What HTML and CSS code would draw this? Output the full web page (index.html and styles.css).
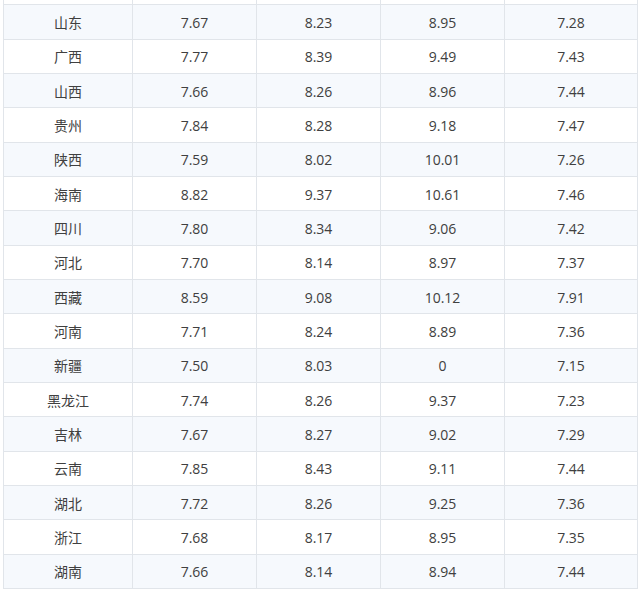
FILE: index.html
```html
<!DOCTYPE html>
<html lang="zh-CN">
<head>
<meta charset="utf-8">
<title>油价表</title>
<link rel="stylesheet" href="styles.css">
</head>
<body>
<div class="wrap">
<table class="price-table">
<colgroup>
<col class="c1"><col class="c2"><col class="c3"><col class="c4"><col class="c5">
</colgroup>
<tbody>
<tr class="prev"><td></td><td></td><td></td><td></td><td></td></tr>
<tr><td>山东</td><td>7.67</td><td>8.23</td><td>8.95</td><td>7.28</td></tr>
<tr><td>广西</td><td>7.77</td><td>8.39</td><td>9.49</td><td>7.43</td></tr>
<tr><td>山西</td><td>7.66</td><td>8.26</td><td>8.96</td><td>7.44</td></tr>
<tr><td>贵州</td><td>7.84</td><td>8.28</td><td>9.18</td><td>7.47</td></tr>
<tr><td>陕西</td><td>7.59</td><td>8.02</td><td>10.01</td><td>7.26</td></tr>
<tr><td>海南</td><td>8.82</td><td>9.37</td><td>10.61</td><td>7.46</td></tr>
<tr><td>四川</td><td>7.80</td><td>8.34</td><td>9.06</td><td>7.42</td></tr>
<tr><td>河北</td><td>7.70</td><td>8.14</td><td>8.97</td><td>7.37</td></tr>
<tr><td>西藏</td><td>8.59</td><td>9.08</td><td>10.12</td><td>7.91</td></tr>
<tr><td>河南</td><td>7.71</td><td>8.24</td><td>8.89</td><td>7.36</td></tr>
<tr><td>新疆</td><td>7.50</td><td>8.03</td><td>0</td><td>7.15</td></tr>
<tr><td>黑龙江</td><td>7.74</td><td>8.26</td><td>9.37</td><td>7.23</td></tr>
<tr><td>吉林</td><td>7.67</td><td>8.27</td><td>9.02</td><td>7.29</td></tr>
<tr><td>云南</td><td>7.85</td><td>8.43</td><td>9.11</td><td>7.44</td></tr>
<tr><td>湖北</td><td>7.72</td><td>8.26</td><td>9.25</td><td>7.36</td></tr>
<tr><td>浙江</td><td>7.68</td><td>8.17</td><td>8.95</td><td>7.35</td></tr>
<tr><td>湖南</td><td>7.66</td><td>8.14</td><td>8.94</td><td>7.44</td></tr>
</tbody>
</table>
</div>
</body>
</html>
```
FILE: styles.css
```css
html, body {
  margin: 0;
  padding: 0;
  background: #ffffff;
}
.wrap {
  height: 589px;
  overflow: hidden;
}
.price-table {
  margin: -30px 0 0 3px;
  width: 634px;
  table-layout: fixed;
  border-collapse: collapse;
  font-family: "Open Sans", "Noto Sans CJK SC", sans-serif;
  font-size: 14px;
  color: #404040;
}
.c1 { width: 129px; }
.c2 { width: 124px; }
.c3 { width: 124px; }
.c4 { width: 124px; }
.c5 { width: 133px; }
.price-table td {
  height: 31.33px;
  padding: 2px 0 0;
  text-align: center;
  vertical-align: middle;
  border: 1px solid #e1e5ea;
  line-height: 20px;
}
.price-table tr:nth-child(even) td {
  background: #f6f9fd;
}
```
